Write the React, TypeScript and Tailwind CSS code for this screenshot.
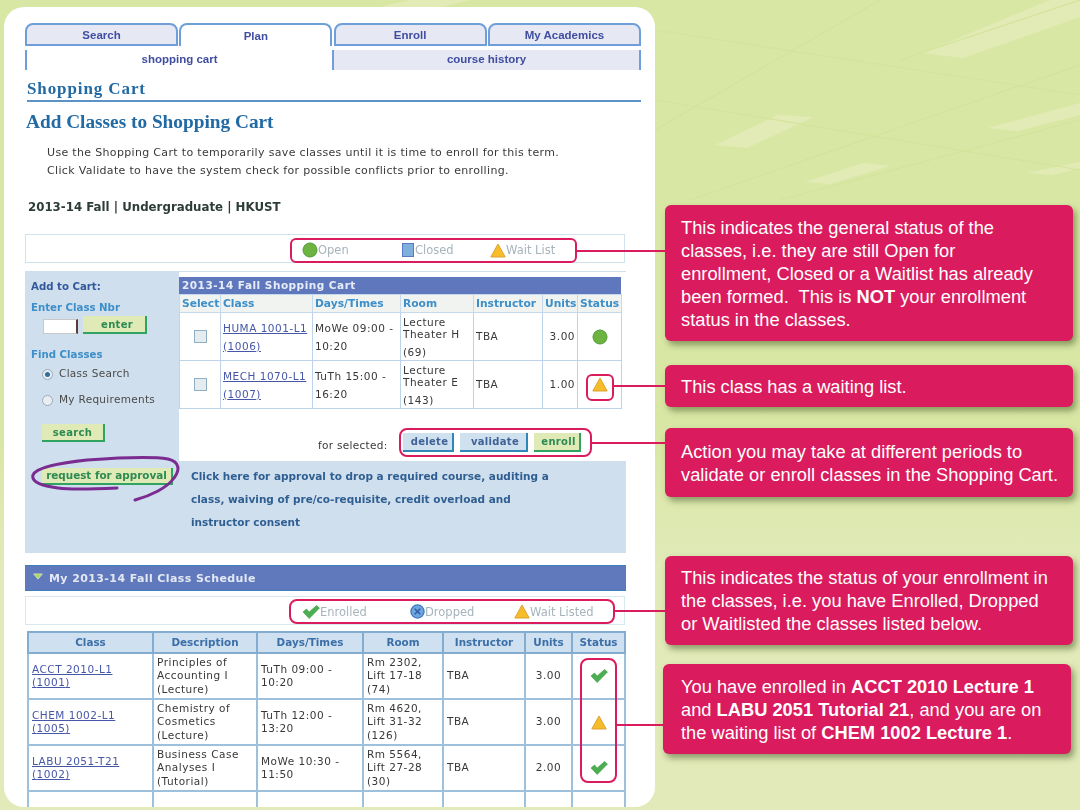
import React from "react";

const Circle = () => (
  <svg viewBox="0 0 16 16" className="w-[16px] h-[16px] shrink-0">
    <circle cx="8" cy="8" r="7" fill="#6db33f" stroke="#4f9a3a" strokeWidth="1" />
  </svg>
);

const Triangle = () => (
  <svg viewBox="0 0 16 15" className="w-[16px] h-[15px] shrink-0">
    <path d="M8 1 L15.2 14 L0.8 14 Z" fill="#f6bc2a" stroke="#dba334" strokeWidth="1" strokeLinejoin="round" />
  </svg>
);

const Check = () => (
  <svg viewBox="0 0 18 14" className="w-[18px] h-[14px] shrink-0">
    <path d="M1 7 L4.5 4 L7.2 7 L14.5 0.5 L17.5 3 L7.2 13.5 Z" fill="#4bae50" stroke="#3f9a4a" strokeWidth="0.6" strokeLinejoin="round" />
  </svg>
);

const Dropped = () => (
  <svg viewBox="0 0 16 16" className="w-[15px] h-[15px] shrink-0">
    <circle cx="8" cy="8" r="7" fill="#6ea6dd" stroke="#3f78c0" strokeWidth="1.4" />
    <path d="M5 5 L11 11 M11 5 L5 11" stroke="#2f5da8" strokeWidth="1.6" />
  </svg>
);

const Tab = ({ label, active }: { label: string; active?: boolean }) => (
  <div
    className={`flex h-[23px] w-[153px] items-center justify-center rounded-t-[8px] border-x-2 border-t-2 border-[#6f9fd8] pt-[3px] font-['Liberation_Sans',sans-serif] text-[11.5px] font-bold text-[#3f4ea0] ${
      active ? "bg-white" : "border-b-2 bg-[#e6e8f4]"
    }`}
  >
    {label}
  </div>
);

const Btn = ({ label, blue, cls }: { label: string; blue?: boolean; cls: string }) => (
  <div
    className={`flex items-center justify-center whitespace-nowrap border-r-2 border-b-2 font-bold ${cls} ${
      blue ? "bg-[#cfe0ee] border-[#2f86b8] text-[#3f6296]" : "bg-[#dfeab6] border-[#2fa35f] text-[#2c8a52]"
    }`}
  >
    {label}
  </div>
);

const Head = ({ children }: { children: React.ReactNode }) => (
  <th className="border border-[#c5d9ec] bg-[#f1f3f0] px-[2px] pt-[1px] text-left text-[10.7px] font-bold text-[#3d8fc9]">{children}</th>
);

const Td = ({ children, cls = "" }: { children?: React.ReactNode; cls?: string }) => (
  <td className={`border border-[#bcd3ea] px-[2px] align-middle text-[10.5px] tracking-[0.5px] text-[#383838] ${cls}`}>{children}</td>
);

const CartRow = ({ code, nbr, days, time, room, seat, units, icon }: Record<string, any>) => (
  <tr className="h-[48px]">
    <Td>
      <div className="mx-auto h-[13px] w-[13px] border border-[#8fb0c4] bg-[#e6ebef]" />
    </Td>
    <Td>
      <div className="leading-[18px] text-[#4657a8] underline">
        {code}
        <br />({nbr})
      </div>
    </Td>
    <Td>
      <div className="leading-[18px]">
        {days}
        <br />
        {time}
      </div>
    </Td>
    <Td>
      <div className="leading-[12px]">
        Lecture
        <br />
        {room}
      </div>
      <div className="mt-[6px] leading-[12px]">{seat}</div>
    </Td>
    <Td>TBA</Td>
    <Td cls="text-right">{units}</Td>
    <Td>
      <div className="flex justify-center">{icon}</div>
    </Td>
  </tr>
);

const SHead = ({ children }: { children: React.ReactNode }) => (
  <th className="border-2 border-[#82add0] bg-[#cfe0f0] text-center text-[10.4px] font-bold text-[#3b6fa8]">{children}</th>
);

const STd = ({ children, cls = "" }: { children?: React.ReactNode; cls?: string }) => (
  <td className={`border-2 border-[#9dc0dc] px-[3px] align-middle text-[10.5px] leading-[13.5px] tracking-[0.5px] text-[#383838] ${cls}`}>{children}</td>
);

const ScheduleRow = ({ code, nbr, desc, type, days, time, room, lift, seat, units, icon }: Record<string, any>) => (
  <tr className="h-[46px]">
    <STd>
      <div className="text-[#4657a8] underline">
        {code}
        <br />({nbr})
      </div>
    </STd>
    <STd>
      {desc}
      <br />
      {type}
    </STd>
    <STd>
      {days}
      <br />
      {time}
    </STd>
    <STd>
      {room}
      <br />
      {lift}
      <br />
      {seat}
    </STd>
    <STd>TBA</STd>
    <STd cls="text-center">{units}</STd>
    <STd>
      <div className="flex justify-center">{icon}</div>
    </STd>
  </tr>
);

const Callout = ({ cls, children }: { cls: string; children: React.ReactNode }) => (
  <div className={`flex w-[408px] items-center rounded-[6px] bg-[#da1b5e] text-[18.3px] leading-[23px] text-white shadow-[3px_4px_6px_rgba(70,90,40,0.55)] ${cls}`}>
    <p className="whitespace-nowrap">{children}</p>
  </div>
);

export default function App() {
  return (
    <div className="relative flex h-[810px] w-[1080px] overflow-hidden bg-gradient-to-b from-[#d9e7a5] from-55% to-[#e1eab8] to-70% pl-[4px] pt-[7px] font-['DejaVu_Sans',sans-serif]">
      {/* ceiling texture behind everything */}
      <svg viewBox="0 0 1080 810" className="absolute left-0 top-0 h-[810px] w-[1080px]">
        <g fill="#e2ebb6">
          <path d="M923 53 L1050 0 L1080 0 L1080 17 L963 58 Z" />
          <path d="M715 145 L778 115 L813 117 L747 148 Z" />
          <path d="M805 182 L863 163 L890 166 L830 184 Z" />
          <path d="M988 128 L1080 103 L1080 115 L1017 131 Z" />
          <path d="M1027 173 L1080 162 L1080 168 L1053 175 Z" />
          <path d="M380 7 L410 0 L470 0 L440 7 Z" />
        </g>
        <g stroke="#d4e39b" strokeWidth="1.2" fill="none">
          <path d="M655 130 L880 0" />
          <path d="M655 30 L1080 95" />
          <path d="M655 100 L1080 170" />
          <path d="M690 200 L1080 65" />
          <path d="M780 200 L1080 120" />
          <path d="M900 60 L1080 0" />
        </g>
      </svg>

      <main className="relative h-[800px] w-[651px] shrink-0 overflow-hidden rounded-[20px] bg-white pl-[21px] pt-[16px] blur-[0.35px]">
        <div className="flex h-[23px] w-[616px] justify-between">
          <Tab label="Search" />
          <Tab label="Plan" active />
          <Tab label="Enroll" />
          <Tab label="My Academics" />
        </div>
        <div className="mt-[4px] flex h-[20px] w-[616px] font-['Liberation_Sans',sans-serif] text-[11.5px] font-bold text-[#3f4ea0]">
          <div className="flex w-[307px] items-center justify-center border-l-2 border-[#6f9fd8] bg-white">shopping cart</div>
          <div className="flex flex-1 items-center justify-center border-x-2 border-[#6f9fd8] bg-[#e6e8f4]">course history</div>
        </div>

        <h2 className="mt-[8px] ml-[2px] flex h-[24px] w-[614px] items-center border-b-2 border-[#5b93c9] font-['Liberation_Serif',serif] text-[17px] font-bold tracking-[0.9px] text-[#226aa4]">
          Shopping Cart
        </h2>
        <h1 className="mt-[8px] ml-[1px] flex h-[24px] items-center font-['Liberation_Serif',serif] text-[19.3px] font-bold text-[#226aa4]">
          Add Classes to Shopping Cart
        </h1>
        <p className="mt-[10px] ml-[22px] text-[11px] leading-[18px] tracking-[0.33px] text-[#3a3a3a]">
          Use the Shopping Cart to temporarily save classes until it is time to enroll for this term.
          <br />
          Click Validate to have the system check for possible conflicts prior to enrolling.
        </p>
        <div className="mt-[18px] ml-[3px] h-[18px] text-[11.8px] font-bold leading-[18px] text-[#2c3c38]">2013-14 Fall | Undergraduate | HKUST</div>

        <div className="mt-[18px] flex h-[29px] w-[600px] items-center border border-[#cfe2ee] pl-[276px] pt-[3px] text-[11.5px] text-[#a6b4bd]">
          <div className="flex w-[100px] items-center"><Circle /><span className="pt-[2px]">Open</span></div>
          <div className="flex w-[88px] items-center">
            <div className="mr-[1px] h-[14px] w-[12px] border border-[#5a78c8] bg-[#7fb0dc]" />
            <span className="pt-[2px]">Closed</span>
          </div>
          <div className="flex items-center"><Triangle /><span className="pt-[2px]">Wait List</span></div>
        </div>

        <section className="mt-[8px] flex h-[282px] w-[601px] bg-[#d0dfed]">
          <div className="w-[154px] shrink-0 pl-[6px] pt-[9px] text-[10.2px]">
            <div className="h-[14px] font-bold leading-[14px] text-[#34589c]">Add to Cart:</div>
            <div className="mt-[7px] h-[14px] font-bold leading-[14px] text-[#3d8fc9]">Enter Class Nbr</div>
            <div className="ml-[12px] mt-[1px] flex h-[18px]">
              <div className="mt-[3px] h-[15px] w-[35px] border border-[#c8c8c8] border-r-2 border-r-[#5a3a3a] bg-white" />
              <Btn label="enter" cls="ml-[5px] h-[18px] w-[64px] pl-[6px] text-[10px] tracking-[0.3px]" />
            </div>
            <div className="mt-[14px] h-[14px] font-bold leading-[14px] text-[#3d8fc9]">Find Classes</div>
            <div className="ml-[11px] mt-[5px] flex h-[14px] items-center gap-[6px] text-[10.5px] tracking-[0.3px] text-[#4a4a4a]">
              <div className="flex h-[11px] w-[11px] items-center justify-center rounded-full border border-[#9ab] bg-[#e9eef2]">
                <div className="h-[5px] w-[5px] rounded-full bg-[#2f6f9f]" />
              </div>
              Class Search
            </div>
            <div className="ml-[11px] mt-[12px] flex h-[14px] items-center gap-[6px] text-[10.5px] tracking-[0.3px] text-[#4a4a4a]">
              <div className="h-[11px] w-[11px] rounded-full border border-[#9ab] bg-[#e9eef2]" />
              My Requirements
            </div>
            <Btn label="search" cls="ml-[11px] mt-[17px] h-[18px] w-[63px] text-[10px] tracking-[0.3px]" />
            <Btn label="request for approval" cls="ml-[11px] mt-[26px] h-[17px] w-[131px] text-[10.4px]" />
          </div>

          <div className="flex-1 pt-[1px]">
            <div className="h-[189px] bg-white pt-[5px]">
              <div className="flex h-[17px] w-[442px] items-center bg-[#5f78bd] pl-[3px] text-[10.5px] font-bold tracking-[0.5px] text-[#e8ecf6]">
                2013-14 Fall Shopping Cart
              </div>
              <table className="w-[442px] table-fixed border-collapse">
                <colgroup>
                  <col className="w-[41px]" />
                  <col className="w-[92px]" />
                  <col className="w-[88px]" />
                  <col className="w-[73px]" />
                  <col className="w-[69px]" />
                  <col className="w-[35px]" />
                  <col className="w-[44px]" />
                </colgroup>
                <thead>
                  <tr className="h-[17px]">
                    <Head>Select</Head>
                    <Head>Class</Head>
                    <Head>Days/Times</Head>
                    <Head>Room</Head>
                    <Head>Instructor</Head>
                    <Head>Units</Head>
                    <Head>Status</Head>
                  </tr>
                </thead>
                <tbody>
                  <CartRow code="HUMA 1001-L1" nbr="1006" days="MoWe 09:00 -" time="10:20" room="Theater H" seat="(69)" units="3.00" icon={<Circle />} />
                  <CartRow code="MECH 1070-L1" nbr="1007" days="TuTh 15:00 -" time="16:20" room="Theater E" seat="(143)" units="1.00" icon={<Triangle />} />
                </tbody>
              </table>
              <div className="mt-[24px] flex h-[19px] items-center text-[10.5px] tracking-[0.3px] text-[#3a3a3a]">
                <span className="ml-[139px] w-[85px] pt-[7px]">for selected:</span>
                <Btn label="delete" blue cls="h-[19px] w-[51px] pl-[4px] text-[10px]" />
                <Btn label="validate" blue cls="ml-[6px] h-[19px] w-[68px] pl-[4px] text-[10px]" />
                <Btn label="enroll" cls="ml-[6px] h-[19px] w-[47px] pl-[4px] text-[10px]" />
              </div>
            </div>
            <p className="pl-[12px] pt-[4px] text-[10.5px] font-bold leading-[23px] text-[#2f5f92]">
              Click here for approval to drop a required course, auditing a
              <br />
              class, waiving of pre/co-requisite, credit overload and
              <br />
              instructor consent
            </p>
          </div>
        </section>

        <div className="mt-[12px] flex h-[26px] w-[601px] items-center gap-[5px] border-y border-[#3f7fc0] bg-[#6079bd] pl-[7px] pt-[2px] text-[11px] font-bold tracking-[0.4px] text-[#e3e8f3]">
          <svg viewBox="0 0 12 8" className="mb-[6px] h-[7px] w-[12px]">
            <path d="M1 1 L11 1 L6 7 Z" fill="#a9d86a" stroke="#dfeec0" strokeWidth="0.8" />
          </svg>
          My 2013-14 Fall Class Schedule
        </div>

        <div className="mt-[5px] flex h-[29px] w-[600px] items-center border border-[#d9e7ef] pl-[276px] pt-[2px] text-[11.5px] text-[#a6b4bd]">
          <div className="flex w-[108px] items-center"><Check /><span className="pt-[2px]">Enrolled</span></div>
          <div className="flex w-[104px] items-center"><Dropped /><span className="pt-[2px]">Dropped</span></div>
          <div className="flex items-center"><Triangle /><span className="pt-[2px]">Wait Listed</span></div>
        </div>

        <table className="ml-[2px] mt-[6px] w-[597px] table-fixed border-collapse">
          <colgroup>
            <col className="w-[125px]" />
            <col className="w-[104px]" />
            <col className="w-[106px]" />
            <col className="w-[80px]" />
            <col className="w-[82px]" />
            <col className="w-[47px]" />
            <col className="w-[53px]" />
          </colgroup>
          <thead>
            <tr className="h-[21px]">
              <SHead>Class</SHead>
              <SHead>Description</SHead>
              <SHead>Days/Times</SHead>
              <SHead>Room</SHead>
              <SHead>Instructor</SHead>
              <SHead>Units</SHead>
              <SHead>Status</SHead>
            </tr>
          </thead>
          <tbody>
            <ScheduleRow code="ACCT 2010-L1" nbr="1001" desc={<>Principles of<br />Accounting I</>} type="(Lecture)" days="TuTh 09:00 -" time="10:20" room="Rm 2302," lift="Lift 17-18" seat="(74)" units="3.00" icon={<Check />} />
            <ScheduleRow code="CHEM 1002-L1" nbr="1005" desc={<>Chemistry of<br />Cosmetics</>} type="(Lecture)" days="TuTh 12:00 -" time="13:20" room="Rm 4620," lift="Lift 31-32" seat="(126)" units="3.00" icon={<Triangle />} />
            <ScheduleRow code="LABU 2051-T21" nbr="1002" desc={<>Business Case<br />Analyses I</>} type="(Tutorial)" days="MoWe 10:30 -" time="11:50" room="Rm 5564," lift="Lift 27-28" seat="(30)" units="2.00" icon={<Check />} />
            <tr className="h-[46px]">
              <STd /><STd /><STd /><STd /><STd /><STd /><STd />
            </tr>
          </tbody>
        </table>
      </main>

      <aside className="relative ml-[10px] pt-[198px] font-['Liberation_Sans',sans-serif]">
        <Callout cls="h-[136px] pl-[16px]">
          This indicates the general status of the
          <br />
          classes, i.e. they are still Open for
          <br />
          enrollment, Closed or a Waitlist has already
          <br />
          been formed.&nbsp; This is <b>NOT</b> your enrollment
          <br />
          status in the classes.
        </Callout>
        <Callout cls="mt-[24px] h-[42px] pl-[16px]">This class has a waiting list.</Callout>
        <Callout cls="mt-[21px] h-[69px] pl-[16px]">
          Action you may take at different periods to
          <br />
          validate or enroll classes in the Shopping Cart.
        </Callout>
        <Callout cls="mt-[59px] h-[89px] pl-[16px]">
          This indicates the status of your enrollment in
          <br />
          the classes, i.e. you have Enrolled, Dropped
          <br />
          or Waitlisted the classes listed below.
        </Callout>
        <Callout cls="mt-[19px] -ml-[2px] h-[90px] pl-[18px]">
          You have enrolled in <b>ACCT 2010 Lecture 1</b>
          <br />
          and <b>LABU 2051 Tutorial 21</b>, and you are on
          <br />
          the waiting list of <b>CHEM 1002 Lecture 1</b>.
        </Callout>
      </aside>

      {/* highlight rings and leader lines over the screenshot */}
      <div className="absolute left-[290px] top-[238px] h-[25px] w-[287px] rounded-[6px] border-2 border-[#da1b5e]" />
      <div className="absolute left-[576px] top-[250px] h-[2px] w-[89px] bg-[#da1b5e]" />
      <div className="absolute left-[586px] top-[374px] h-[27px] w-[28px] rounded-[6px] border-2 border-[#da1b5e]" />
      <div className="absolute left-[613px] top-[385px] h-[2px] w-[52px] bg-[#da1b5e]" />
      <div className="absolute left-[399px] top-[428px] h-[29px] w-[193px] rounded-[8px] border-2 border-[#da1b5e]" />
      <div className="absolute left-[591px] top-[442px] h-[2px] w-[74px] bg-[#da1b5e]" />
      <div className="absolute left-[289px] top-[599px] h-[25px] w-[326px] rounded-[8px] border-2 border-[#da1b5e]" />
      <div className="absolute left-[614px] top-[610px] h-[2px] w-[51px] bg-[#da1b5e]" />
      <div className="absolute left-[580px] top-[658px] h-[125px] w-[37px] rounded-[8px] border-2 border-[#da1b5e]" />
      <div className="absolute left-[616px] top-[724px] h-[2px] w-[47px] bg-[#da1b5e]" />
      <svg viewBox="31 455 150 48" className="absolute left-[31px] top-[455px] h-[48px] w-[150px]">
        <path
          d="M117 488 C95 489 72 490 58 488 C42 486 31 482 33 475 C36 467 60 463 87 460 C115 458 150 456 168 459 C180 462 180 470 174 478 C167 488 150 496 135 500"
          fill="none"
          stroke="#7a2c90"
          strokeWidth="3"
          strokeLinecap="round"
        />
      </svg>
    </div>
  );
}
